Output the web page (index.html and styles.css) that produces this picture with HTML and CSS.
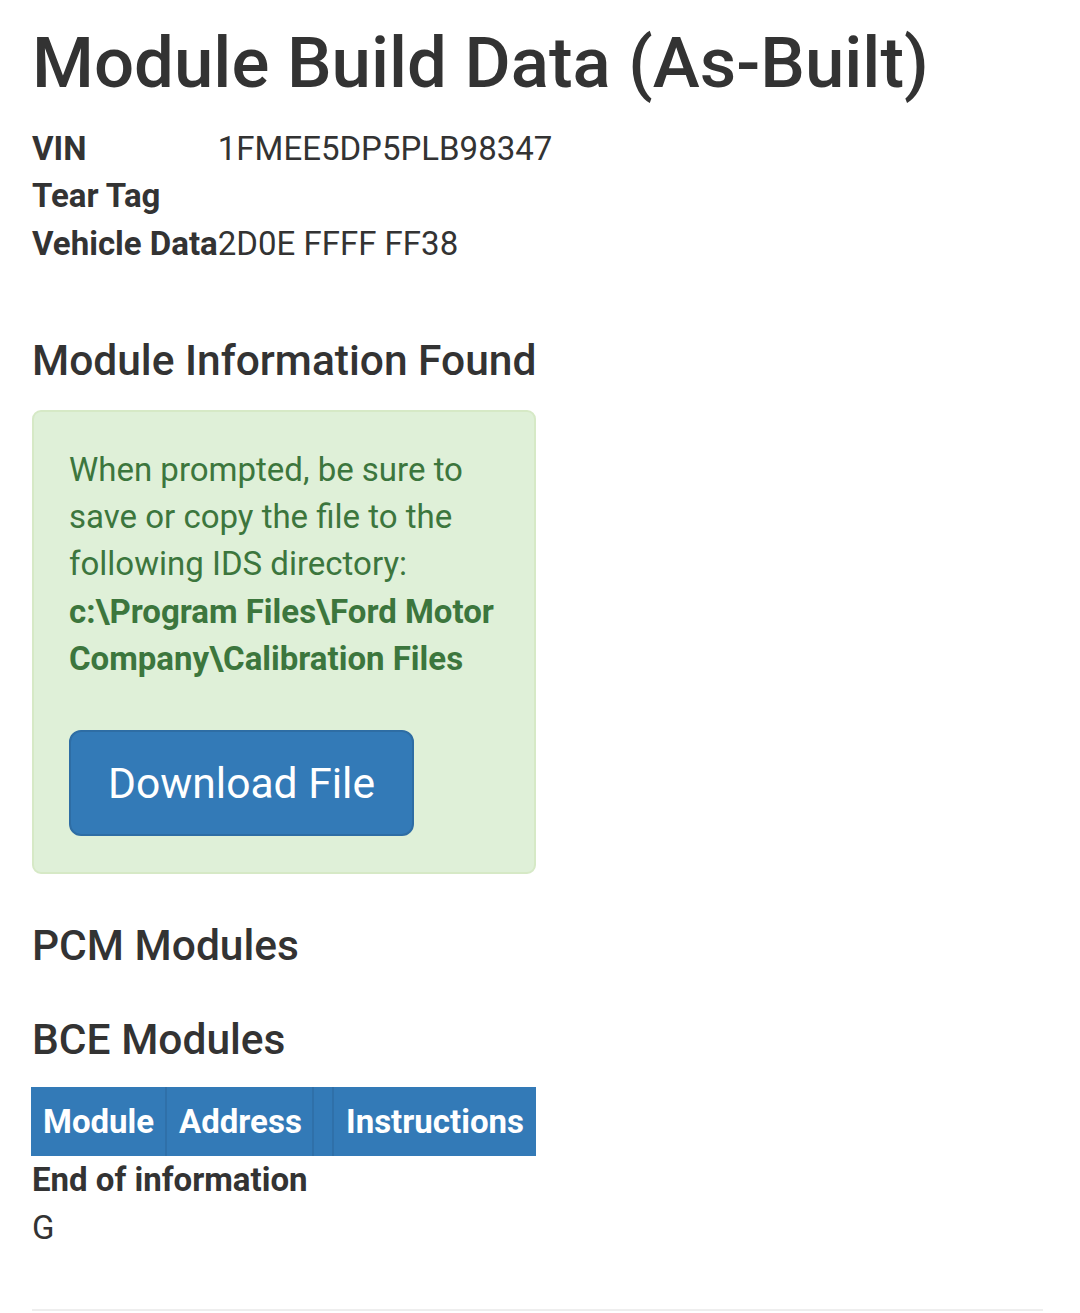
FILE: index.html
```html
<!DOCTYPE html>
<html lang="en">
<head>
<meta charset="utf-8">
<title>Module Build Data (As-Built)</title>
<link rel="stylesheet" href="styles.css">
</head>
<body>
<div class="container">
  <h1 class="title">Module Build Data (As-Built)</h1>
  <table class="info">
    <tr><th>VIN</th><td>1FMEE5DP5PLB98347</td></tr>
    <tr><th>Tear Tag</th><td></td></tr>
    <tr><th>Vehicle Data</th><td>2D0E FFFF FF38</td></tr>
  </table>

  <h4 class="section found">Module Information Found</h4>
  <div class="alert">
    <p class="alert-text">When prompted, be sure to save or copy the file to the following IDS directory: <strong>c:\Program Files\Ford Motor Company\Calibration Files</strong></p>
    <a class="btn" href="#">Download File</a>
  </div>

  <h4 class="section pcm">PCM Modules</h4>
  <h4 class="section bce">BCE Modules</h4>
  <table class="modules">
    <thead>
      <tr><th class="c1">Module</th><th class="c2">Address</th><th class="c3"></th><th class="c4">Instructions</th></tr>
    </thead>
  </table>
  <div class="end">End of information</div>
  <div class="line">G</div>
  <hr class="rule">
</div>
</body>
</html>
```
FILE: styles.css
```css
html, body {
  margin: 0;
  padding: 0;
  background: #fff;
}
body {
  font-family: Roboto, "Liberation Sans", sans-serif;
  font-size: 33px;
  line-height: 47.5px;
  color: #333;
}
.container {
  padding: 0 32px;
}
.title {
  font-size: 70.8px;
  font-weight: 500;
  line-height: 78px;
  margin: 24px 0 22.5px;
  color: #333;
}
.info {
  border-collapse: collapse;
}
.info th, .info td {
  padding: 0;
  text-align: left;
  vertical-align: top;
  height: 47.5px;
}
.info th {
  font-weight: 700;
}
.section {
  font-size: 42.5px;
  font-weight: 500;
  line-height: 47px;
  margin: 0;
  color: #333;
}
.found {
  margin-top: 70px;
  margin-bottom: 26px;
}
.alert {
  width: 504px;
  box-sizing: border-box;
  background: #dff0d8;
  border: 2px solid #d6e9c6;
  border-radius: 9px;
  color: #3c763d;
  padding: 34px 35px 36px;
  line-height: 47.2px;
}
.alert-text {
  margin: 0 0 48px;
}
.alert-text strong {
  font-weight: 700;
}
.btn {
  display: inline-block;
  box-sizing: border-box;
  height: 106px;
  line-height: 102px;
  padding: 0 37px;
  background: #337ab7;
  border: 2px solid #2e6da4;
  border-radius: 12px;
  color: #fff;
  text-decoration: none;
  font-size: 42.6px;
  vertical-align: top;
}
.pcm {
  margin-top: 48px;
}
.bce {
  margin-top: 47px;
  margin-bottom: 24px;
}
.modules {
  border-collapse: collapse;
  width: 505px;
  margin-left: -1px;
  background: #337ab7;
  table-layout: fixed;
}
.modules th {
  box-sizing: border-box;
  height: 69px;
  padding: 0 12px;
  color: #fff;
  font-weight: 700;
  text-align: left;
  border-left: 2px solid #2f70a9;
  white-space: nowrap;
  overflow: hidden;
}
.modules th:first-child {
  border-left: 0;
}
.modules .c1 { width: 135px; }
.modules .c2 { width: 147px; }
.modules .c3 { width: 20px; padding: 0; }
.modules .c4 { width: 203px; }
.end {
  font-weight: 700;
}
.rule {
  border: 0;
  border-top: 2px solid #eee;
  margin: 58px 5px 0 0;
  height: 0;
}
```
